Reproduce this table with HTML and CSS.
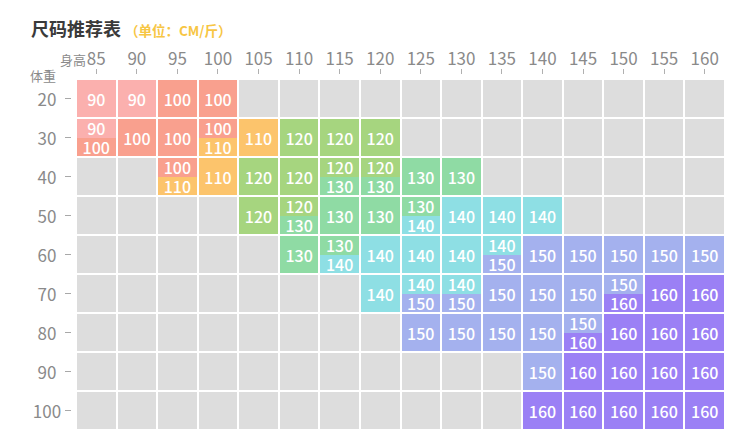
FILE: index.html
```html
<!DOCTYPE html>
<html lang="zh">
<head>
<meta charset="utf-8">
<link rel="stylesheet" href="styles.css">
</head>
<body>
<div class="page">
  <div class="title">
    <h1>尺码推荐表</h1>
    <span class="unit">（单位：CM/斤）</span>
  </div>
  <div class="chart">
    <div class="corner"><span class="h">身高</span><span class="w">体重</span></div>
    <div class="hd">85</div><div class="hd">90</div><div class="hd">95</div><div class="hd">100</div>
    <div class="hd">105</div><div class="hd">110</div><div class="hd">115</div><div class="hd">120</div>
    <div class="hd">125</div><div class="hd">130</div><div class="hd">135</div><div class="hd">140</div>
    <div class="hd">145</div><div class="hd">150</div><div class="hd">155</div><div class="hd">160</div>

    <div class="rl"><span>20</span></div>
    <div class="c v90">90</div><div class="c v90">90</div><div class="c v100">100</div><div class="c v100">100</div>
    <div class="c"></div><div class="c"></div><div class="c"></div><div class="c"></div>
    <div class="c"></div><div class="c"></div><div class="c"></div><div class="c"></div>
    <div class="c"></div><div class="c"></div><div class="c"></div><div class="c"></div>

    <div class="rl"><span>30</span></div>
    <div class="c s"><span class="v90">90</span><span class="v100">100</span></div>
    <div class="c v100">100</div><div class="c v100">100</div>
    <div class="c s"><span class="v100">100</span><span class="v110">110</span></div>
    <div class="c v110">110</div><div class="c v120">120</div><div class="c v120">120</div><div class="c v120">120</div>
    <div class="c"></div><div class="c"></div><div class="c"></div><div class="c"></div>
    <div class="c"></div><div class="c"></div><div class="c"></div><div class="c"></div>

    <div class="rl"><span>40</span></div>
    <div class="c"></div><div class="c"></div>
    <div class="c s"><span class="v100">100</span><span class="v110">110</span></div>
    <div class="c v110">110</div><div class="c v120">120</div><div class="c v120">120</div>
    <div class="c s"><span class="v120">120</span><span class="v130">130</span></div>
    <div class="c s"><span class="v120">120</span><span class="v130">130</span></div>
    <div class="c v130">130</div><div class="c v130">130</div>
    <div class="c"></div><div class="c"></div><div class="c"></div><div class="c"></div><div class="c"></div><div class="c"></div>

    <div class="rl"><span>50</span></div>
    <div class="c"></div><div class="c"></div><div class="c"></div><div class="c"></div>
    <div class="c v120">120</div>
    <div class="c s"><span class="v120">120</span><span class="v130">130</span></div>
    <div class="c v130">130</div><div class="c v130">130</div>
    <div class="c s"><span class="v130">130</span><span class="v140">140</span></div>
    <div class="c v140">140</div><div class="c v140">140</div><div class="c v140">140</div>
    <div class="c"></div><div class="c"></div><div class="c"></div><div class="c"></div>

    <div class="rl"><span>60</span></div>
    <div class="c"></div><div class="c"></div><div class="c"></div><div class="c"></div><div class="c"></div>
    <div class="c v130">130</div>
    <div class="c s"><span class="v130">130</span><span class="v140">140</span></div>
    <div class="c v140">140</div><div class="c v140">140</div><div class="c v140">140</div>
    <div class="c s"><span class="v140">140</span><span class="v150">150</span></div>
    <div class="c v150">150</div><div class="c v150">150</div><div class="c v150">150</div><div class="c v150">150</div><div class="c v150">150</div>

    <div class="rl"><span>70</span></div>
    <div class="c"></div><div class="c"></div><div class="c"></div><div class="c"></div><div class="c"></div><div class="c"></div><div class="c"></div>
    <div class="c v140">140</div>
    <div class="c s"><span class="v140">140</span><span class="v150">150</span></div>
    <div class="c s"><span class="v140">140</span><span class="v150">150</span></div>
    <div class="c v150">150</div><div class="c v150">150</div><div class="c v150">150</div>
    <div class="c s"><span class="v150">150</span><span class="v160">160</span></div>
    <div class="c v160">160</div><div class="c v160">160</div>

    <div class="rl"><span>80</span></div>
    <div class="c"></div><div class="c"></div><div class="c"></div><div class="c"></div><div class="c"></div><div class="c"></div><div class="c"></div><div class="c"></div>
    <div class="c v150">150</div><div class="c v150">150</div><div class="c v150">150</div><div class="c v150">150</div>
    <div class="c s"><span class="v150">150</span><span class="v160">160</span></div>
    <div class="c v160">160</div><div class="c v160">160</div><div class="c v160">160</div>

    <div class="rl"><span>90</span></div>
    <div class="c"></div><div class="c"></div><div class="c"></div><div class="c"></div><div class="c"></div><div class="c"></div>
    <div class="c"></div><div class="c"></div><div class="c"></div><div class="c"></div><div class="c"></div>
    <div class="c v150">150</div><div class="c v160">160</div><div class="c v160">160</div><div class="c v160">160</div><div class="c v160">160</div>

    <div class="rl"><span>100</span></div>
    <div class="c"></div><div class="c"></div><div class="c"></div><div class="c"></div><div class="c"></div><div class="c"></div>
    <div class="c"></div><div class="c"></div><div class="c"></div><div class="c"></div><div class="c"></div>
    <div class="c v160">160</div><div class="c v160">160</div><div class="c v160">160</div><div class="c v160">160</div><div class="c v160">160</div>
  </div>
</div>
</body>
</html>
```

FILE: styles.css
```css
* { box-sizing: border-box; }

body {
  margin: 0;
  background: #ffffff;
  font-family: "Noto Sans CJK SC", "Noto Sans", sans-serif;
}

.page {
  width: 750px;
  height: 447px;
  padding-top: 15px;
}

.title {
  display: flex;
  align-items: baseline;
  padding-left: 31px;
  height: 33px;
}

.title h1 {
  margin: 0;
  font-size: 18px;
  line-height: 26px;
  font-weight: 700;
  color: #3a3a3a;
}

.unit {
  margin-left: 4px;
  font-size: 13.5px;
  font-weight: 700;
  color: #f7c644;
}

.chart {
  display: grid;
  width: 724px;
  grid-template-columns: 75px repeat(16, 1fr);
  grid-template-rows: 30px repeat(9, 37px);
  column-gap: 2px;
  row-gap: 2px;
}

.corner {
  display: flex;
  flex-direction: column;
  align-items: flex-end;
  padding-top: 3px;
  color: #8a8a8a;
  font-size: 13px;
}

.corner .h {
  line-height: 17px;
  margin-right: -11px;
}

.corner .w {
  align-self: flex-start;
  margin-left: 30px;
  line-height: 15px;
}

.hd {
  display: flex;
  flex-direction: column;
  align-items: center;
  font-size: 17px;
  line-height: 20px;
  color: #8a8a8a;
}

.hd::after {
  content: "";
  width: 1px;
  height: 5px;
  margin-top: 1px;
  background: #b0b0b0;
}

.rl {
  display: flex;
  align-items: center;
  padding-left: 30px;
  font-size: 17px;
  color: #8a8a8a;
}

.rl span {
  width: 34px;
  text-align: center;
}

.rl::after {
  content: "";
  width: 6px;
  height: 1px;
  margin-left: 1px;
  background: #a8a8a8;
}

.c {
  display: flex;
  align-items: center;
  justify-content: center;
  background: #dddddd;
  color: #ffffff;
  font-size: 16px;
  font-weight: 500;
}

.c.s {
  flex-direction: column;
  align-items: stretch;
}

.c.s span {
  flex: 1;
  display: flex;
  align-items: center;
  justify-content: center;
  line-height: 16px;
}

.v90 { background: #fbb0ae; }
.v100 { background: #f9a08e; }
.v110 { background: #fcc46c; }
.v120 { background: #a6d57f; }
.v130 { background: #8fdba4; }
.v140 { background: #8edfe4; }
.v150 { background: #a4b1ee; }
.v160 { background: #9b80f5; }
```
